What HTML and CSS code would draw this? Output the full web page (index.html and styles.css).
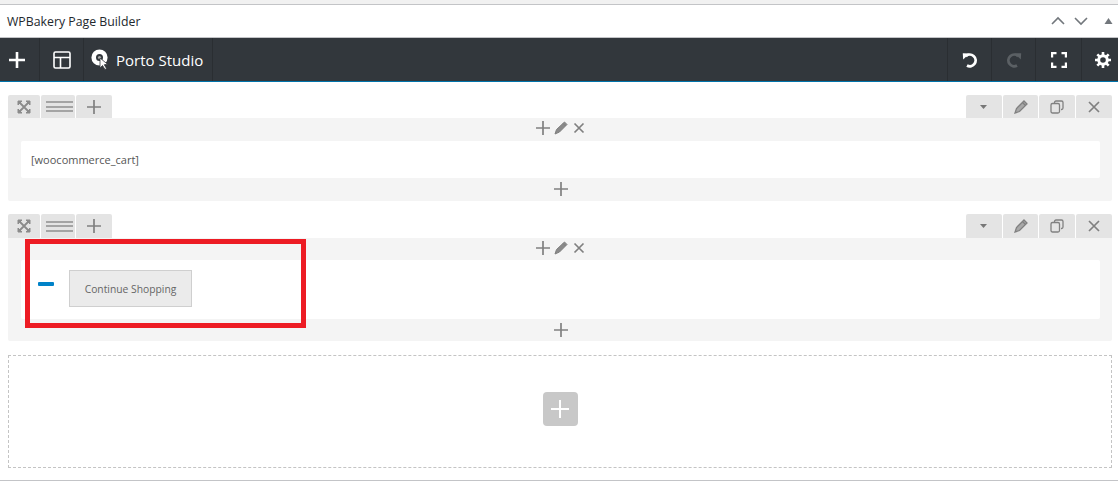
FILE: index.html
```html
<!DOCTYPE html>
<html lang="en">
<head>
    <meta charset="UTF-8">
    <title>WPBakery Page Builder</title>
    <link rel="stylesheet" href="styles.css">
</head>
<body>
    <div class="metabox">
        <div class="box-head">
            <h2>WPBakery Page Builder</h2>
            <div class="box-arrows">
                <svg width="14" height="10" viewBox="0 0 14 10"><path d="M1 8l6-6 6 6" class="arrow"/></svg>
                <svg width="14" height="10" viewBox="0 0 14 10"><path d="M1 2l6 6 6-6" class="arrow"/></svg>
                <svg class="tri" width="9" height="8" viewBox="0 0 9 8"><path d="M4.500 1l4 6h-8z" fill="#72777c"/></svg>
            </div>
        </div>

        <div class="toolbar">
            <div class="tool tool-add">
                <svg width="18" height="18" viewBox="0 0 18 18"><path d="M9 1v16M1 9h16" stroke="#fff" stroke-width="2.600" fill="none"/></svg>
            </div>
            <div class="tool tool-layout">
                <svg width="18" height="18" viewBox="0 0 18 18"><path d="M2.500 1h13A1.500 1.500 0 0 1 17 2.500v13a1.500 1.500 0 0 1-1.500 1.500h-13A1.500 1.500 0 0 1 1 15.500v-13A1.500 1.500 0 0 1 2.500 1zM1 6.500h16M7.500 6.500V17" stroke="#fff" stroke-width="1.600" fill="none"/></svg>
            </div>
            <div class="tool tool-studio">
                <svg width="19" height="22" viewBox="0 0 19 22"><circle cx="8.500" cy="8.500" r="5.800" fill="none" stroke="#fff" stroke-width="4.600"/><circle cx="8.500" cy="8.500" r="1.600" fill="#aaa"/><path d="M9 9l0 10 2.500-2.500 2.500 4 1.500-1-2.200-3.800 3.200-.5z" fill="#fff" stroke="#32373c" stroke-width=".8"/></svg>
                <span>Porto Studio</span>
            </div>
            <div class="tool-spacer"></div>
            <div class="tool tool-right">
                <svg width="16" height="16" viewBox="0 0 16 16"><path d="M3.800 4.200A5.800 5.800 0 1 1 5 13.500" stroke="#fff" stroke-width="2.800" fill="none"/><path d="M.8 1.200l6.600.2-6.200 6.200z" fill="#fff"/></svg>
            </div>
            <div class="tool tool-right">
                <svg width="16" height="16" viewBox="0 0 16 16"><path d="M12.200 4.200A5.800 5.800 0 1 0 11 13.500" stroke="#5b6064" stroke-width="2.800" fill="none"/><path d="M15.200 1.200L8.600 1.400l6.200 6.200z" fill="#5b6064"/></svg>
            </div>
            <div class="tool tool-right">
                <svg width="16" height="16" viewBox="0 0 16 16"><path d="M1 5.500V1h4.500M10.500 1H15v4.500M15 10.500V15h-4.500M5.500 15H1v-4.500" stroke="#fff" stroke-width="2.400" fill="none"/></svg>
            </div>
            <div class="tool tool-right tool-last">
                <svg width="16" height="16" viewBox="0 0 16 16"><circle cx="8" cy="8" r="4.300" fill="none" stroke="#fff" stroke-width="3"/><path d="M8 0v3M8 13v3M0 8h3M13 8h3M2.300 2.300l2.100 2.100M11.600 11.600l2.100 2.100M2.300 13.700l2.100-2.100M11.600 4.400l2.100-2.100" stroke="#fff" stroke-width="2.600"/></svg>
            </div>
        </div>

        <div class="editor">
            <div class="row">
                <div class="row-controls">
                    <div class="tab tab-first">
                        <svg width="14" height="14" viewBox="0 0 14 14"><path d="M1 1h4L1 5zM13 1v4L9 1zM1 13V9l4 4zM13 13H9l4-4z" fill="#8a8a8a" stroke="#8a8a8a"/><path d="M3 3l8 8M11 3l-8 8" stroke="#8a8a8a" stroke-width="1.800"/></svg>
                    </div>
                    <div class="tab tab-lines"><span class="lines"></span></div>
                    <div class="tab tab-plus">
                        <svg width="14" height="14" viewBox="0 0 14 14"><path d="M7 0v14M0 7h14" class="icon-line"/></svg>
                    </div>
                    <div class="tab-gap"></div>
                    <div class="tab tab-plus">
                        <svg width="8" height="4" viewBox="0 0 8 4"><path d="M0 0h7L3.500 4z" fill="#777"/></svg>
                    </div>
                    <div class="tab tab-edit">
                        <svg width="14" height="14" viewBox="0 0 14 14"><path d="M10 1l3 3-7.500 7.500L1 13l1.500-4.500zM8.500 2.500l3 3" fill="#a8a8a8" stroke="#808080" stroke-width="1.300"/></svg>
                    </div>
                    <div class="tab tab-plus">
                        <svg width="14" height="14" viewBox="0 0 14 14"><path d="M4.500 3V2.500a1.500 1.500 0 0 1 1.500-1.500h5.500A1.500 1.500 0 0 1 13 2.500V8a1.500 1.500 0 0 1-1.500 1.500H11M2.500 3.500H8A1.500 1.500 0 0 1 9.500 5v6.500A1.500 1.500 0 0 1 8 13H2.500A1.500 1.500 0 0 1 1 11.500V5a1.500 1.500 0 0 1 1.500-1.500z" fill="none" stroke="#808080" stroke-width="1.300"/></svg>
                    </div>
                    <div class="tab tab-plus">
                        <svg width="14" height="14" viewBox="0 0 14 14"><path d="M2 2l10 10M12 2L2 12" class="icon-line"/></svg>
                    </div>
                </div>
                <div class="row-body">
                    <div class="col-controls col-controls-tall">
                        <svg width="14" height="14" viewBox="0 0 14 14"><path d="M7 0v14M0 7h14" class="icon-line"/></svg>
                        <svg width="14" height="14" viewBox="0 0 14 14"><path d="M10.500 1L13 3.500l-7.500 7.500L1 13l1.500-4.500zM9 2.500l2.500 2.500" fill="#8a8a8a" stroke="#808080"/></svg>
                        <svg width="14" height="14" viewBox="0 0 14 14"><path d="M2.500 2.500l9 9M11.500 2.500l-9 9" class="icon-line"/></svg>
                    </div>
                    <div class="col-content col-cart">[woocommerce_cart]</div>
                    <div class="col-add col-add-tall">
                        <svg width="14" height="14" viewBox="0 0 14 14"><path d="M7 0v14M0 7h14" class="icon-line"/></svg>
                    </div>
                </div>
            </div>

            <div class="row row-second">
                <div class="row-controls">
                    <div class="tab tab-first">
                        <svg width="14" height="14" viewBox="0 0 14 14"><path d="M1 1h4L1 5zM13 1v4L9 1zM1 13V9l4 4zM13 13H9l4-4z" fill="#8a8a8a" stroke="#8a8a8a"/><path d="M3 3l8 8M11 3l-8 8" stroke="#8a8a8a" stroke-width="1.800"/></svg>
                    </div>
                    <div class="tab tab-lines"><span class="lines"></span></div>
                    <div class="tab tab-plus">
                        <svg width="14" height="14" viewBox="0 0 14 14"><path d="M7 0v14M0 7h14" class="icon-line"/></svg>
                    </div>
                    <div class="tab-gap"></div>
                    <div class="tab tab-plus">
                        <svg width="8" height="4" viewBox="0 0 8 4"><path d="M0 0h7L3.500 4z" fill="#777"/></svg>
                    </div>
                    <div class="tab tab-edit">
                        <svg width="14" height="14" viewBox="0 0 14 14"><path d="M10 1l3 3-7.500 7.500L1 13l1.500-4.500zM8.500 2.500l3 3" fill="#a8a8a8" stroke="#808080" stroke-width="1.300"/></svg>
                    </div>
                    <div class="tab tab-plus">
                        <svg width="14" height="14" viewBox="0 0 14 14"><path d="M4.500 3V2.500a1.500 1.500 0 0 1 1.500-1.500h5.500A1.500 1.500 0 0 1 13 2.500V8a1.500 1.500 0 0 1-1.500 1.500H11M2.500 3.500H8A1.500 1.500 0 0 1 9.500 5v6.500A1.500 1.500 0 0 1 8 13H2.500A1.500 1.500 0 0 1 1 11.500V5a1.500 1.500 0 0 1 1.500-1.500z" fill="none" stroke="#808080" stroke-width="1.300"/></svg>
                    </div>
                    <div class="tab tab-plus">
                        <svg width="14" height="14" viewBox="0 0 14 14"><path d="M2 2l10 10M12 2L2 12" class="icon-line"/></svg>
                    </div>
                </div>
                <div class="row-body">
                    <div class="col-controls">
                        <svg width="14" height="14" viewBox="0 0 14 14"><path d="M7 0v14M0 7h14" class="icon-line"/></svg>
                        <svg width="14" height="14" viewBox="0 0 14 14"><path d="M10.500 1L13 3.500l-7.500 7.500L1 13l1.500-4.500zM9 2.500l2.500 2.500" fill="#8a8a8a" stroke="#808080"/></svg>
                        <svg width="14" height="14" viewBox="0 0 14 14"><path d="M2.500 2.500l9 9M11.500 2.500l-9 9" class="icon-line"/></svg>
                    </div>
                    <div class="col-content col-button">
                        <span class="dash"></span>
                        <span class="btn">Continue Shopping</span>
                    </div>
                    <div class="col-add">
                        <svg width="14" height="14" viewBox="0 0 14 14"><path d="M7 0v14M0 7h14" class="icon-line"/></svg>
                    </div>
                </div>
                <div class="highlight"></div>
            </div>

            <div class="empty-zone">
                <div class="empty-add">
                    <svg width="18" height="18" viewBox="0 0 18 18"><path d="M9 0v18M0 9h18" stroke="#fff" stroke-width="2" fill="none"/></svg>
                </div>
            </div>
        </div>
    </div>
</body>
</html>
```

FILE: styles.css
```css
body {
    margin: 0;
    padding-top: 4px;
    background-color: #f1f1f1;
    font-family: "Open Sans", Arial, sans-serif;
    overflow: hidden;
}
.metabox {
    background-color: white;
    border-top: 1px solid #c3c4c7;
    border-bottom: 1px solid #c3c4c7;
    height: 475px;
}
.box-head {
    height: 32px;
    display: flex;
    align-items: center;
    justify-content: space-between;
    padding: 0 5px 0 7px;
    border-bottom: 1px solid #c3c4c7;
}
.box-head h2 {
    margin: 0;
    font-size: 12.3px;
    font-weight: 400;
    color: #23282d;
}
.box-arrows {
    display: flex;
    align-items: center;
    gap: 9px;
}
.box-arrows .tri {
    margin-left: 7px;
}
.arrow {
    fill: none;
    stroke: #72777c;
    stroke-width: 1.600;
}
.toolbar {
    height: 43px;
    display: flex;
    background-color: #32373c;
    border-bottom: 1px solid #0073aa;
}
.tool {
    display: flex;
    align-items: center;
    justify-content: center;
    border-right: 1px solid #2a2e32;
    box-sizing: border-box;
}
.tool-add {
    width: 40px;
    padding-right: 5px;
}
.tool-layout {
    width: 44px;
}
.tool-studio {
    width: 129px;
    gap: 6px;
    color: white;
    font-size: 15px;
    justify-content: flex-start;
    padding-left: 7px;
}
.tool-spacer {
    flex: 1;
    border-right: 1px solid #2a2e32;
}
.tool-right {
    width: 44px;
}
.tool-right:nth-last-child(2) {
    width: 46px;
}
.tool-last {
    width: 36px;
    border-right: none;
    justify-content: flex-end;
    padding-right: 7px;
}
.editor {
    padding: 13px 6px 0 8px;
}
.row {
    position: relative;
    margin-bottom: 13px;
}
.row-second {
    margin-bottom: 14px;
}
.row-controls {
    display: flex;
    gap: 1px;
    height: 23px;
}
.row-second .row-controls {
    height: 24px;
}
.tab {
    display: flex;
    align-items: center;
    justify-content: center;
    background-color: #e4e4e4;
    border-radius: 2px 2px 0 0;
    width: 36px;
}
.tab-first {
    width: 32px;
}
.tab-lines {
    width: 34px;
    padding-left: 2px;
    box-sizing: border-box;
}
.tab-edit {
    width: 35px;
}
.tab-gap {
    flex: 1;
}
.lines {
    display: block;
    width: 27px;
    height: 11px;
    border-top: 2px solid #a4a4a4;
    border-bottom: 2px solid #a4a4a4;
    box-sizing: border-box;
    background: linear-gradient(#a4a4a4, #a4a4a4) center / 100% 2px no-repeat;
}
.icon-line {
    fill: none;
    stroke: #808080;
    stroke-width: 1.700;
}
.row-body {
    background-color: #f4f4f4;
    padding: 0 12px 0 13px;
    border-radius: 0 0 2px 2px;
}
.col-controls {
    height: 22px;
    box-sizing: border-box;
    padding-bottom: 2px;
    display: flex;
    align-items: center;
    justify-content: center;
    gap: 4px;
}
.col-controls-tall {
    height: 23px;
    padding-bottom: 3px;
}
.col-content {
    background-color: white;
    border-radius: 2px;
    box-sizing: border-box;
}
.col-cart {
    height: 37px;
    line-height: 38px;
    padding-left: 10px;
    font-size: 11px;
    color: #555;
}
.col-button {
    height: 59px;
    display: flex;
    align-items: center;
    padding-left: 17px;
}
.dash {
    display: block;
    width: 16px;
    height: 4px;
    margin: 0 15px 11px 0;
    border-radius: 1px;
    background-color: #0082c8;
}
.btn {
    width: 123px;
    height: 37px;
    margin-bottom: 2px;
    text-align: center;
    box-sizing: border-box;
    border: 1px solid #cfcfcf;
    background-color: #ebebeb;
    font-size: 10.300px;
    color: #666;
    line-height: 37px;
}
.col-add {
    height: 22px;
    display: flex;
    align-items: center;
    justify-content: center;
}
.col-add-tall {
    height: 23px;
    box-sizing: border-box;
    padding-bottom: 2px;
}
.highlight {
    position: absolute;
    left: 17px;
    top: 25px;
    width: 281px;
    height: 89px;
    box-sizing: border-box;
    border: 5px solid #ed1c24;
}
.empty-zone {
    height: 113px;
    box-sizing: border-box;
    border: 1px dashed #c4c4c4;
    padding-bottom: 5px;
    display: flex;
    align-items: center;
    justify-content: center;
}
.empty-add {
    width: 35px;
    height: 34px;
    border-radius: 4px;
    background-color: #c8c8c8;
    display: flex;
    align-items: center;
    justify-content: center;
}
```
